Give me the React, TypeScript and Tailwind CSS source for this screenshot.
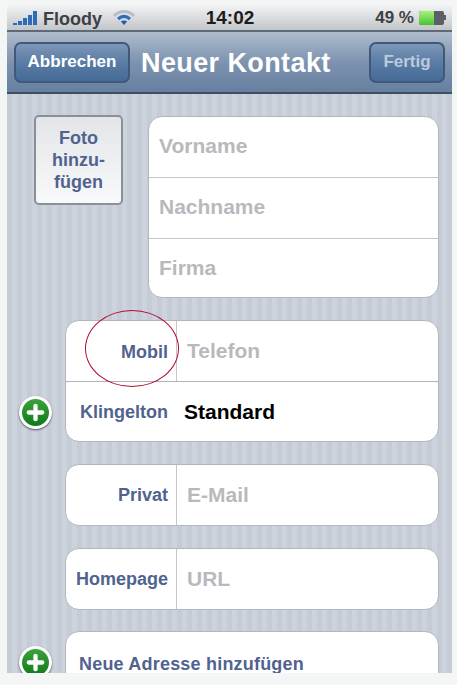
import { Plus } from "lucide-react";

const labelClass = "text-[18px] font-bold text-[#50638f]";
const hintClass = "text-[21px] font-bold text-[#b9b9bd]";

const SignalBars = () => (
  <div className="flex items-end gap-[1px] h-[14px]">
    {["h-[2px]", "h-[4px]", "h-[7px]", "h-[10px]", "h-[14px]"].map((h) => (
      <div key={h} className={`w-[4px] bg-[#2c6cb8] ${h}`} />
    ))}
  </div>
);

const Wifi = () => (
  <svg width="24" height="18" viewBox="0 0 24 18" fill="none" strokeLinecap="butt">
    <path d="M2 7 C8 1 16 1 22 7" stroke="#b8bfc8" strokeWidth="3" />
    <path d="M6 10 C10 6.5 14 6.5 18 10" stroke="#2c6cb8" strokeWidth="3" />
    <path d="M12 16 L8.8 12.6 C10.6 11.2 13.4 11.2 15.2 12.6 Z" fill="#1f5fae" />
  </svg>
);

const Battery = () => (
  <div className="flex items-center">
    <div className="flex w-[25px] h-[14px] bg-[#5c6066] rounded-[2px] overflow-hidden">
      <div className="w-[15px] bg-gradient-to-b from-[#a8ef7c] to-[#3fc52c]" />
    </div>
    <div className="w-[2px] h-[5px] bg-[#5c6066]" />
  </div>
);

const NavButton = ({ label, className }: { label: string; className: string }) => (
  <button
    type="button"
    className={`h-[41px] rounded-[7px] border-2 border-[#41587a] bg-gradient-to-b from-[#7d97b8] via-[#5a7ca5] to-[#466a97] text-[17px] font-bold ${className}`}
  >
    {label}
  </button>
);

const AddIcon = () => (
  <div className="w-[33px] h-[33px] rounded-full bg-white shadow-[0_1px_2px_rgba(0,0,0,0.6)] flex items-center justify-center shrink-0">
    <div className="w-[27px] h-[27px] rounded-full bg-gradient-to-b from-[#3aa33a] to-[#0b7a1a] flex items-center justify-center">
      <Plus size={23} strokeWidth={4.5} className="text-white" />
    </div>
  </div>
);

const FieldCard = ({ label, hint }: { label: string; hint: string }) => (
  <div className="ml-[58px] mr-[13px] h-[62px] flex bg-white rounded-[14px] border border-[#b3b7bd]">
    <div className={`w-[110px] pr-[8px] flex items-center justify-end ${labelClass}`}>{label}</div>
    <div className={`flex-1 pl-[10px] flex items-center border-l border-[#c4c6c9] ${hintClass}`}>{hint}</div>
  </div>
);

export default function App() {
  return (
    <div className="relative w-[457px] h-[685px] bg-[#f3f6f5] pl-[7px] pr-[5px] pt-[5px] pb-[12px] font-['Liberation_Sans',Arial,sans-serif]">
      <div className="h-full overflow-hidden flex flex-col">
        {/* status bar */}
        <div className="h-[27px] shrink-0 flex items-center justify-between pl-[6px] pr-[5px] bg-gradient-to-b from-[#f2f3f4] to-[#c3c6c9] border-b-2 border-[#5d6a78]">
          <div className="flex items-center w-[160px]">
            <SignalBars />
            <span className="ml-[6px] pt-[3px] text-[18px] font-bold text-[#3d4046]">Floody</span>
            <div className="ml-[10px]">
              <Wifi />
            </div>
          </div>
          <span className="pt-[1px] text-[19px] font-bold text-[#1c1c1e]">14:02</span>
          <div className="flex items-center justify-end w-[160px] gap-[5px] pr-[1px]">
            <span className="text-[17px] font-bold text-[#3d4046]">49 %</span>
            <Battery />
          </div>
        </div>

        {/* nav bar */}
        <div className="h-[62px] shrink-0 flex items-center pl-[7px] pr-[7px] bg-gradient-to-b from-[#b0bccc] via-[#7d93b0] to-[#67809f] border-b-2 border-[#3f4f63]">
          <NavButton label="Abbrechen" className="w-[116px] text-white" />
          <h1 className="ml-[11px] flex-1 pt-[2px] text-[27px] font-bold tracking-[0.4px] text-white whitespace-nowrap">
            Neuer Kontakt
          </h1>
          <NavButton label="Fertig" className="w-[76px] text-[#bccadb]" />
        </div>

        {/* form */}
        <div className="relative flex-1 min-h-0 overflow-hidden pt-[21px] bg-[repeating-linear-gradient(90deg,#c5ccd6_0,#c5ccd6_5px,#ccd3dc_5px,#ccd3dc_10px)]">
          <div className="flex items-start pl-[27px] pr-[13px]">
            <div className="w-[89px] h-[90px] rounded-[5px] border-2 border-[#8b9096] bg-gradient-to-b from-[#e3e5e8] to-[#f8f9fa] flex items-center justify-center text-center text-[18px] leading-[22px] font-bold text-[#50638f]">
              <span>
                Foto
                <br />
                hinzu-
                <br />
                fügen
              </span>
            </div>
            <div className="ml-[25px] mt-[1px] flex-1 h-[182px] flex flex-col bg-white rounded-[14px] border border-[#b3b7bd]">
              <div className={`h-[61px] pl-[10px] pb-[3px] flex items-center border-b border-[#c4c6c9] ${hintClass}`}>Vorname</div>
              <div className={`h-[61px] pl-[10px] pb-[3px] flex items-center border-b border-[#c4c6c9] ${hintClass}`}>Nachname</div>
              <div className={`flex-1 pl-[10px] pb-[1px] flex items-center ${hintClass}`}>Firma</div>
            </div>
          </div>

          <div className="mt-[22px] flex items-end">
            <div className="w-[58px] pb-[13px] pl-[12px]">
              <AddIcon />
            </div>
            <div className="flex-1 mr-[13px] h-[122px] flex flex-col bg-white rounded-[14px] border border-[#b3b7bd]">
              <div className="h-[61px] flex border-b border-[#b0b3b7]">
                <div className={`w-[110px] pr-[8px] pt-[2px] flex items-center justify-end ${labelClass}`}>Mobil</div>
                <div className={`flex-1 pl-[10px] flex items-center border-l border-[#c4c6c9] ${hintClass}`}>Telefon</div>
              </div>
              <div className="flex-1 flex items-center pt-[1px]">
                <div className={`w-[110px] pr-[8px] text-right ${labelClass}`}>Klingelton</div>
                <div className="pl-[8px] text-[21px] font-bold text-black">Standard</div>
              </div>
            </div>
          </div>

          <div className="mt-[22px]">
            <FieldCard label="Privat" hint="E-Mail" />
          </div>
          <div className="mt-[22px]">
            <FieldCard label="Homepage" hint="URL" />
          </div>

          <div className="mt-[21px] flex">
            <div className="w-[58px] pt-[15px] pl-[12px]">
              <AddIcon />
            </div>
            <div className="flex-1 mr-[13px] h-[62px] pl-[13px] pt-[19px] bg-white rounded-[14px] border border-[#b3b7bd] text-[18px] tracking-[0.2px] font-bold text-[#50638f]">
              Neue Adresse hinzufügen
            </div>
          </div>
        </div>
      </div>

      {/* red annotation circle */}
      <div className="absolute left-[85px] top-[310px] w-[94px] h-[77px] rounded-[50%] border border-[#b01030]" />
    </div>
  );
}
